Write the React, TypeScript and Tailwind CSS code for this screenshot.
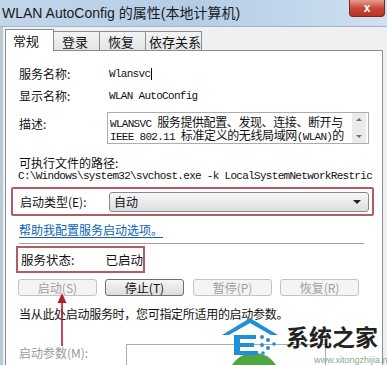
import React from "react";

const cjk = '"Noto Sans CJK SC", "Liberation Sans", sans-serif';
const mono = '"Liberation Mono", "Noto Sans CJK SC", monospace';

function L({ children }: { children: React.ReactNode }) {
  return (
    <span className="text-[11px] tracking-[-0.7px] whitespace-pre" style={{ fontFamily: mono }}>
      {children}
    </span>
  );
}

function Btn({ label, disabled }: { label: string; disabled?: boolean }) {
  return (
    <div
      className={
        "w-[79px] h-[17px] flex items-center justify-center rounded-[3px] border text-[12px] leading-none whitespace-nowrap " +
        (disabled
          ? "border-[#c4c4c4] bg-[#f4f4f4] text-[#a0a0a0]"
          : "border-[#707070] bg-gradient-to-b from-[#f6f6f6] to-[#dcdcdc] text-[#111]")
      }
    >
      {label}
    </div>
  );
}

export default function App() {
  return (
    <div
      className="relative w-[387px] h-[365px] overflow-hidden bg-[#f0f0f0] whitespace-nowrap"
      style={{ fontFamily: cjk }}
    >
      {/* Title bar */}
      <div className="relative h-[27px] bg-gradient-to-r from-[#c2d6ea] via-[#b4cde6] to-[#cfe0f0] border-b border-[#9fb4c8] flex items-center pl-[2px]">
        <span className="text-[14px] text-[#1a1a1a] leading-none" style={{ fontFamily: '"Liberation Sans", "Noto Sans CJK SC", sans-serif' }}>
          WLAN AutoConfig 的属性(本地计算机)
        </span>
        <div className="absolute right-[2px] top-0 w-[36px] h-[17px] rounded-b-[4px] border border-[#7a2a22] border-t-0 bg-gradient-to-b from-[#e59a8c] via-[#c9473a] to-[#b83224] flex items-center justify-center">
          <span className="text-white text-[12px] font-bold leading-none" style={{ fontFamily: '"Liberation Sans", sans-serif' }}>x</span>
        </div>
      </div>

      <div className="flex h-[338px]">
        <div className="w-[4px] bg-[#b9c9d6]" />
        <div className="flex-1 pl-[2px] pr-[4px] pt-[3px] flex flex-col">
          {/* Tabs */}
          <div className="flex items-end h-[20px] relative z-10 text-[13px] text-[#111] leading-none">
            <div className="w-[49px] h-[22px] bg-white border border-[#898c95] border-b-0 flex items-center pl-[7px] -mb-[1px]">常规</div>
            <div className="w-[46px] h-[19px] bg-gradient-to-b from-[#f4f4f4] to-[#e4e4e4] border border-[#898c95] border-l-0 border-b-0 flex items-center pl-[8px]">登录</div>
            <div className="w-[46px] h-[19px] bg-gradient-to-b from-[#f4f4f4] to-[#e4e4e4] border border-[#898c95] border-l-0 border-b-0 flex items-center pl-[8px]">恢复</div>
            <div className="w-[56px] h-[19px] bg-gradient-to-b from-[#f4f4f4] to-[#e4e4e4] border border-[#898c95] border-l-0 border-b-0 flex items-center pl-[3px]">依存关系</div>
          </div>
          {/* Panel */}
          <div className="flex-1 bg-white border border-[#898c95] border-b-0 pl-[13px] pr-[8px] flex flex-col text-[12px] leading-[14px] text-[#111]">
            <div className="h-[12px] shrink-0" />
            <div className="flex items-center h-[22px] shrink-0">
              <div className="w-[90px]">服务名称:</div>
              <div className="flex items-center">
                <L>Wlansvc</L>
                <span className="w-[1px] h-[12px] bg-black ml-[1px]" />
              </div>
            </div>
            <div className="flex items-center h-[22px] shrink-0">
              <div className="w-[90px]">显示名称:</div>
              <L>WLAN AutoConfig</L>
            </div>
            <div className="flex mt-[5px] shrink-0">
              <div className="w-[88px] pt-[5px]">描述:</div>
              <div className="w-[262px] h-[32px] border border-[#abadb3] flex overflow-hidden">
                <div className="flex-1 pl-[2px] pt-[2px] text-[12px] tracking-[-0.4px] overflow-hidden">
                  <div className="h-[13px] leading-[13px]"><L>WLANSVC </L>服务提供配置、发现、连接、断开与</div>
                  <div className="h-[13px] leading-[13px]"><L>IEEE 802.11 </L>标准定义的无线局域网<L>(WLAN)</L>的</div>
                </div>
                <div className="w-[14px] shrink-0 bg-[#eaeaea] flex flex-col items-center justify-between py-[5px] mr-[2px]">
                  <span className="w-0 h-0 border-l-[3px] border-r-[3px] border-b-[3px] border-l-transparent border-r-transparent border-b-[#707070]" />
                  <span className="w-0 h-0 border-l-[3px] border-r-[3px] border-t-[3px] border-l-transparent border-r-transparent border-t-[#707070]" />
                </div>
              </div>
            </div>
            <div className="h-[13px] flex items-center mt-[12px] shrink-0">可执行文件的路径:</div>
            <div className="h-[14px] flex items-center -ml-[1px] shrink-0 overflow-hidden">
              <L>C:\Windows\system32\svchost.exe -k LocalSystemNetworkRestric</L>
            </div>
            {/* startup type red box */}
            <div className="mt-[4px] -ml-[8px] w-[363px] h-[29px] border-[2px] border-[#b45a60] rounded-[2px] flex items-center pl-[7px] shrink-0">
              <div className="w-[89px]">启动类型(E):</div>
              <div className="w-[260px] h-[20px] rounded-[3px] border border-[#8a8a8a] bg-gradient-to-b from-[#f7f7f7] to-[#dedede] flex items-center justify-between px-[4px]">
                <span>自动</span>
                <span className="w-0 h-0 border-l-[4px] border-r-[4px] border-t-[4px] border-l-transparent border-r-transparent border-t-[#222] mr-[3px]" />
              </div>
            </div>
            <div className="h-[27px] flex items-center shrink-0">
              <span className="text-[#0a62b8] underline underline-offset-2">帮助我配置服务启动选项。</span>
            </div>
            <div className="h-[1px] bg-[#a0a0a0] w-[345px] shrink-0" />
            <div className="mt-[2px] -ml-[3px] w-[129px] h-[27px] border-[2px] border-[#b45a60] flex items-center pl-[3px] text-[12.5px] shrink-0">
              <div className="w-[88px]">服务状态:</div>
              <div>已启动</div>
            </div>
            <div className="flex mt-[6px] -ml-[1px] gap-[8px] shrink-0">
              <Btn label="启动(S)" disabled />
              <Btn label="停止(T)" />
              <div className="ml-[1px]"><Btn label="暂停(P)" disabled /></div>
              <Btn label="恢复(R)" disabled />
            </div>
            <div className="h-[36px] flex items-center text-[12px] tracking-[-0.3px] shrink-0">
              当从此处启动服务时，您可指定所适用的启动参数。
            </div>
            <div className="flex items-start mt-[12px] shrink-0">
              <div className="w-[107px] text-[#9a9a9a] pt-[2px]">启动参数(M):</div>
              <div className="w-[200px] h-[30px] border border-[#abadb3] bg-white" />
            </div>
          </div>
        </div>
      </div>

      {/* red arrow */}
      <svg className="absolute left-[56px] top-[293px]" width="12" height="53" viewBox="0 0 12 53">
        <line x1="6" y1="8" x2="6" y2="53" stroke="#b3202c" strokeWidth="1.6" />
        <polygon points="6,0 1.5,10 10.5,10" fill="#b3202c" />
      </svg>

      {/* watermark */}
      <div className="absolute left-[218px] top-[316px] w-[169px] h-[49px]">
        <svg className="absolute left-0 top-0" width="80" height="49" viewBox="0 0 80 49">
          <path d="M14 49 A26 26 0 0 1 58 49" fill="#3d9a2e" opacity="0.9" />
          <path d="M4 19 L32 2 L60 19 L53 19 L32 7 L11 19 Z" fill="#1f8fd6" />
          <rect x="16" y="19" width="6" height="20" fill="#1f8fd6" />
          <rect x="22" y="19" width="16" height="4" fill="#1f8fd6" />
          <rect x="22" y="27" width="14" height="4" fill="#1f8fd6" />
          <rect x="22" y="35" width="18" height="4" fill="#1f8fd6" />
          <circle cx="44" cy="21" r="2" fill="#1f8fd6" />
          <circle cx="50" cy="24" r="2" fill="#1f8fd6" />
          <circle cx="44" cy="29" r="2" fill="#1f8fd6" />
          <circle cx="50" cy="32" r="2" fill="#1f8fd6" />
          <circle cx="56" cy="28" r="1.8" fill="#1f8fd6" />
          <circle cx="45" cy="37" r="1.8" fill="#1f8fd6" />
        </svg>
        <div className="absolute left-[68px] top-[9px] text-[23px] font-bold text-[#222] leading-none" style={{ fontFamily: cjk }}>
          系统之家
        </div>
        <div className="absolute left-[96px] top-[40px] text-[9px] text-[#8aa88a] leading-none" style={{ fontFamily: '"Liberation Sans", sans-serif' }}>
          www.xitongzhijia.net
        </div>
      </div>
    </div>
  );
}
